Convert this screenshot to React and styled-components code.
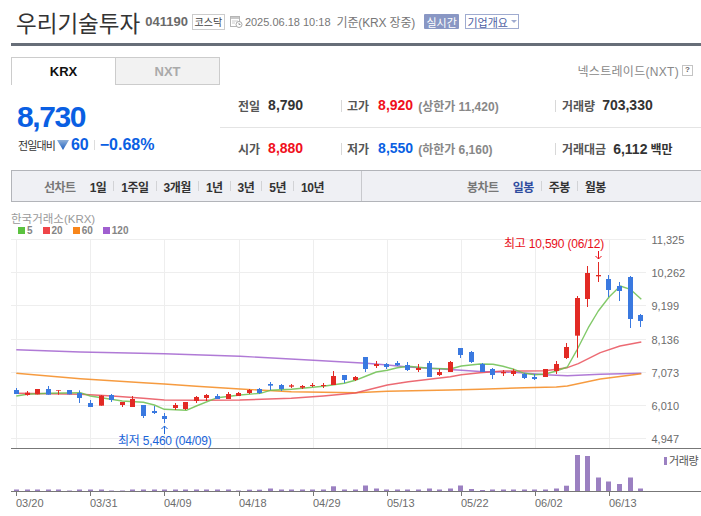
import styled, { createGlobalStyle } from "styled-components";

const GlobalStyle = createGlobalStyle`
  html, body {
    margin: 0;
    padding: 0;
    background: #fff;
    font-family: "Liberation Sans", "Noto Sans CJK KR", sans-serif;
  }
`;

const Page = styled.div`
  width: 701px;
  height: 516px;
  overflow: hidden;
  background: #fff;
`;

const Header = styled.div`
  display: flex;
  align-items: center;
  height: 43px;
  margin-left: 11px;
  padding-left: 5px;
  border-bottom: 3px solid #676e78;
  box-sizing: content-box;
`;

const Title = styled.h1`
  margin: 0 5px 0 0;
  font-size: 22.5px;
  font-weight: 400;
  color: #333;
  white-space: nowrap;
`;

const Code = styled.span`
  font-size: 13px;
  font-weight: 700;
  color: #6a6a6a;
  margin-right: 4px;
`;

const Market = styled.span`
  display: inline-flex;
  align-items: center;
  justify-content: center;
  width: 31px;
  height: 14px;
  border: 1px solid #ccc;
  font-size: 10px;
  color: #444;
  margin-right: 5px;
`;

const DateText = styled.span`
  font-size: 11px;
  color: #777;
  margin: 0 6px 0 2px;
  white-space: nowrap;
`;

const BaseText = styled.span`
  font-size: 12px;
  letter-spacing: -0.15px;
  color: #777;
  margin-right: 9px;
  white-space: nowrap;
`;

const RealTime = styled.span`
  display: inline-flex;
  align-items: center;
  justify-content: center;
  width: 35px;
  height: 15px;
  background: #8997c4;
  border-radius: 1px;
  color: #fff;
  font-size: 11px;
  margin-right: 6px;
`;

const CompanyButton = styled.span`
  display: inline-flex;
  align-items: center;
  justify-content: center;
  gap: 3px;
  width: 52px;
  height: 13px;
  border: 1px solid #9fabd0;
  color: #4d5ea3;
  font-size: 11px;
  &::after {
    content: "";
    border: 3px solid transparent;
    border-top: 3px solid #9fabd0;
    margin-top: 3px;
  }
`;

const TabRow = styled.div`
  display: flex;
  align-items: center;
  justify-content: space-between;
  margin: 11px 8px 0 11px;
  height: 28px;
`;

const Tabs = styled.div`
  display: flex;
`;

const Tab = styled.div`
  width: ${(props) => (props.$active ? 105 : 104)}px;
  height: 28px;
  box-sizing: border-box;
  display: flex;
  align-items: center;
  justify-content: center;
  font-size: 13px;
  font-weight: 700;
  border: 1px solid #ccc;
  border-bottom: ${(props) => (props.$active ? "none" : "1px solid #ccc")};
  border-left: ${(props) => (props.$active ? "1px solid #ccc" : "none")};
  color: ${(props) => (props.$active ? "#111" : "#aaa")};
  background: ${(props) => (props.$active ? "#fff" : "#f2f2f2")};
`;

const NextLink = styled.div`
  display: flex;
  align-items: center;
  gap: 3px;
  margin-bottom: 2px;
  font-size: 12px;
  letter-spacing: 0.3px;
  color: #888;
`;

const HelpBox = styled.span`
  display: inline-flex;
  align-items: center;
  justify-content: center;
  width: 9px;
  height: 9px;
  border: 1px solid #c4c4c4;
  font-size: 8px;
  font-weight: 700;
  line-height: 1;
  color: #666;
`;

const Summary = styled.div`
  display: flex;
  height: 85px;
  margin-left: 11px;
`;

const PriceBlock = styled.div`
  width: 209px;
  padding: 15px 0 0 6px;
  box-sizing: border-box;
`;

const Price = styled.div`
  font-size: 30px;
  line-height: 34px;
  font-weight: 700;
  letter-spacing: -1.4px;
  color: #0a5fe3;
`;

const ChangeRow = styled.div`
  display: flex;
  align-items: center;
  height: 20px;
  margin-top: 1px;
  color: #0a5fe3;
  font-weight: 700;
  font-size: 16px;
`;

const ChangeLabel = styled.span`
  font-size: 11px;
  font-weight: 400;
  letter-spacing: -0.9px;
  color: #333;
  margin: 0 2px 0 1px;
`;

const ChangeValue = styled.span`
  margin-left: 2px;
`;

const ChangeDivider = styled.span`
  width: 1px;
  height: 10px;
  background: #ddd;
  margin: 0 5px 0 5px;
`;

const Stats = styled.div`
  flex: 1;
`;

const StatRow = styled.div`
  display: grid;
  grid-template-columns: 121px 214px 1fr;
  height: 42px;
  border-bottom: ${(props) => (props.$line ? "1px solid #e4e4e4" : "none")};
`;

const StatCell = styled.div`
  position: relative;
  display: flex;
  align-items: center;
  gap: ${(props) => props.$gap || 8}px;
  padding-left: ${(props) => props.$pad}px;
  padding-bottom: 2px;
  white-space: nowrap;
  &::before {
    content: "";
    display: ${(props) => (props.$sep ? "block" : "none")};
    position: absolute;
    left: 0;
    top: 15px;
    width: 1px;
    height: 12px;
    background: #d8d8d8;
  }
`;

const StatLabel = styled.span`
  font-size: 12px;
  font-weight: 700;
  color: #555;
`;

const StatValue = styled.span`
  font-size: 14px;
  font-weight: 700;
  color: ${(props) => props.$color || "#333"};
`;

const StatUnit = styled.span`
  font-size: 12px;
  font-weight: 700;
  color: #333;
  margin-left: 3px;
`;

const StatNote = styled.span`
  font-size: 12px;
  font-weight: 700;
  color: #888;
  margin-left: -4px;
`;

const Toolbar = styled.div`
  display: flex;
  height: 30px;
  margin-left: 11px;
  background: #eff0f4;
  border: 1px solid #b2b4b9;
  border-right: none;
`;

const ToolGroup = styled.div`
  display: flex;
  align-items: center;
  width: ${(props) => props.$width}px;
  padding-left: ${(props) => props.$pad}px;
  box-sizing: border-box;
  border-right: ${(props) => (props.$split ? "1px solid #c8c9cd" : "none")};
`;

const ToolTitle = styled.div`
  font-size: 12px;
  font-weight: 700;
  letter-spacing: -0.5px;
  color: #777;
  margin-right: 14px;
`;

const ToolItem = styled.span`
  display: flex;
  align-items: center;
  font-size: 12px;
  font-weight: 700;
  letter-spacing: -0.5px;
  color: ${(props) => (props.$active ? "#2f4c9f" : "#333")};
  &:not(:first-of-type)::before {
    content: "";
    width: 1px;
    height: 10px;
    background: #d2d3d6;
    margin: 0 7px;
  }
`;

const Exchange = styled.div`
  height: 12px;
  margin: 11px 0 0 11px;
  font-size: 11.5px;
  line-height: 12px;
  color: #9a9a9a;
`;

const Legend = styled.div`
  display: flex;
  align-items: center;
  gap: 10px;
  height: 9px;
  margin: 1px 0 0 18px;
`;

const LegendItem = styled.span`
  display: flex;
  align-items: center;
  gap: 2px;
  font-size: 10px;
  font-weight: 700;
  color: #858585;
  &::before {
    content: "";
    width: 7px;
    height: 7px;
    background: ${(props) => props.$color};
  }
`;

const ChartSvg = styled.svg`
  display: block;
  overflow: visible;
`;

const RED = "#e22a24";
const BLUE = "#3a79e0";
const STEP = 10.58;
const BASE_Y = 340;

// [body top, body bottom, wick top, wick bottom, r|b], read off the 3x crop, relative to y=340
const candles = [
  [147, 159, 141, 159, "b"], [155, 162, 150, 164, "r"], [144, 160, 144, 160, "r"], [144, 161, 135, 161, "b"],
  [148, 150, 148, 161, "r"], [147, 160, 147, 160, "b"], [156, 171, 148, 186, "b"], [186, 198, 177, 198, "b"],
  [164, 194, 162, 194, "r"], [162, 177, 159, 183, "b"], [183, 192, 183, 198, "r"], [174, 198, 165, 198, "r"],
  [192, 225, 192, 231, "b"], [210, 216, 195, 219, "b"], [225, 234, 216, 246, "b"], [192, 201, 186, 207, "r"],
  [183, 204, 183, 207, "r"], [168, 180, 165, 186, "r"], [162, 171, 159, 180, "r"], [165, 174, 159, 174, "b"],
  [159, 174, 153, 174, "r"], [156, 165, 153, 165, "r"], [147, 156, 144, 159, "r"], [144, 156, 141, 159, "b"],
  [129, 134, 123, 147, "b"], [132, 144, 129, 150, "b"], [133, 137, 129, 141, "r"], [135, 140, 132, 144, "r"],
  [132, 135, 126, 138, "r"], [132, 135, 126, 141, "r"], [105, 132, 90, 132, "r"], [102, 117, 102, 126, "b"],
  [108, 117, 105, 120, "r"], [48, 84, 48, 93, "b"], [69, 75, 60, 81, "r"], [69, 78, 66, 84, "b"],
  [66, 73, 60, 75, "b"], [72, 87, 63, 90, "b"], [81, 87, 69, 93, "r"], [66, 108, 60, 108, "b"],
  [93, 102, 84, 105, "r"], [63, 93, 60, 93, "r"], [21, 42, 21, 51, "b"], [33, 63, 30, 66, "b"],
  [69, 93, 66, 93, "b"], [84, 102, 81, 114, "b"], [93, 97, 87, 105, "r"], [90, 99, 84, 105, "r"],
  [99, 111, 96, 114, "b"], [108, 114, 99, 117, "b"], [84, 108, 84, 108, "r"], [69, 90, 60, 99, "r"],
  [18, 51, 6, 54, "r"], [-129, -16, -135, 50, "r"], [-204, -126, -225, -102, "r"], [-198, -194, -237, -177, "r"],
  [-186, -153, -198, -132, "b"], [-165, -150, -177, -120, "b"], [-192, -66, -195, -39, "b"], [-78, -60, -81, -42, "b"],
];

const volumes = [
  1.5, 1.5, 1.5, 1.5, 1.5, 0.5, 1.5, 1.5, 1.5, 0.5, 0.5, 1.5, 1.5, 1.5, 1.5, 1.5, 1.5, 1.5, 1.5, 1.5, 1.5, 0.5,
  1.3, 1.3, 2.5, 1.5, 1.5, 1.5, 1.5, 1.5, 4.7, 1.5, 1.5, 5.5, 2.5, 1.5, 1.5, 1.5, 1.5, 2.5, 1.5, 2.5, 5.5, 2,
  1, 1.5, 1.5, 1.5, 1.5, 1.5, 1.5, 2.5, 5.3, 36, 35, 13.5, 9.5, 7, 13.5, 2.5,
];

const averages = [
  {
    color: "#a263cf",
    points:
      "16.3,348.7 80.3,351 164.3,352.7 240,355.3 313.3,359.3 366.3,362.3 387.3,364 408.3,366 429.3,367.3 461.3,369.3 480,370.5 514,371.3 545.3,373.7 567.3,374.7 600.3,373.3 641.3,372.3",
  },
  {
    color: "#f58a1f",
    points:
      "16.3,372.3 80.3,377.7 143.3,381.7 164.3,383 196.3,385.3 240,388 291.3,390.7 323.3,391.3 355.3,391.7 387.3,390.3 450.3,389 480,388.3 524.3,386.7 556.3,386 567.3,385 600.3,378 641.3,372.7",
  },
  {
    color: "#e9505a",
    points:
      "16.3,392.3 48.3,392.7 80.3,393.3 112.3,395 143.3,397.3 164.3,399 196.3,399.3 240,399 291.3,397.3 323.3,395 355.3,392 366.3,389.3 387.3,384 408.3,380.7 429.3,378.3 450.3,375.7 461.3,373.7 480,371.7 503,370 524.3,370 545.3,369.7 567.3,366.7 578.3,362.7 600.3,351.7 620,345 641.3,341",
  },
  {
    color: "#6cc04f",
    points:
      "16.3,395 27.3,393.3 48.3,392.3 80.3,391.7 90.3,395 101.3,396.7 122.3,400 143.3,401.3 154.3,404 164.3,408.3 186.3,409.3 196.3,405 217.3,396.7 240,394 260.3,392.3 270.3,389.3 291.3,388.3 323.3,385.3 344.3,382.3 355.3,379.3 366.3,375 376.3,371 387.3,369.3 397.3,366.7 408.3,365.3 429.3,367.3 450.3,368 461.3,365 480,363 493,363.3 503,365.3 514,368.3 524.3,372.3 535,373.7 545.3,373 556.3,370 567.3,366 577.3,348.3 588.3,326.7 598.3,310 609.3,295.7 620.3,285 630.3,288.3 641.3,298.3",
  },
];

const priceLines = [
  [238.5, "11,325"],
  [271.5, "10,262"],
  [304.5, "9,199"],
  [338.5, "8,136"],
  [371.5, "7,073"],
  [404.5, "6,010"],
  [437.5, "4,947"],
];

const dates = [
  [16.5, "03/20"],
  [90.5, "03/31"],
  [164.5, "04/09"],
  [239.5, "04/18"],
  [313.5, "04/29"],
  [387.5, "05/13"],
  [461.5, "05/22"],
  [535.5, "06/02"],
  [609.5, "06/13"],
];

const CandleChart = () => (
  <ChartSvg width="701" height="282" viewBox="0 234 701 282">
    <g stroke="#eeeeee" strokeWidth="1">
      {priceLines.map(([y]) => (
        <line key={y} x1="11" x2="646" y1={y} y2={y} />
      ))}
      {dates.map(([x]) => (
        <line key={x} x1={x} x2={x} y1="238" y2="447" />
      ))}
    </g>
    <g fontFamily="Liberation Sans, sans-serif" fontSize="11" fill="#6c6c6c">
      {priceLines.map(([y, label]) => (
        <text key={label} x="651.5" y={y + 4.5}>
          {label}
        </text>
      ))}
      {dates.map(([x, label]) => (
        <text key={label} x={x - 0.5} y="506">
          {label}
        </text>
      ))}
    </g>
    {averages.map((line) => (
      <polyline
        key={line.color}
        points={line.points}
        fill="none"
        stroke={line.color}
        strokeWidth="1.4"
        strokeLinejoin="round"
        opacity="0.85"
      />
    ))}
    {candles.map(([top, bottom, wickTop, wickBottom, kind], i) => {
      const x = Math.round(16.5 + STEP * i - 0.5) + 0.5;
      const color = kind === "r" ? RED : BLUE;
      return (
        <g key={i} fill={color}>
          <rect x={x - 0.5} y={BASE_Y + wickTop / 3} width="1" height={(wickBottom - wickTop) / 3} />
          <rect x={x - 2.5} y={BASE_Y + top / 3} width="5" height={(bottom - top) / 3} />
        </g>
      );
    })}
    <line x1="11" x2="701" y1="447.5" y2="447.5" stroke="#777" />
    <line x1="11" x2="701" y1="490.5" y2="490.5" stroke="#777" />
    {dates.map(([x]) => (
      <line key={x} x1={x} x2={x} y1="491" y2="495" stroke="#777" />
    ))}
    {volumes.map((h, i) => (
      <rect
        key={i}
        x={Math.round(16.5 + STEP * i - 0.5) - 2}
        y={490 - h}
        width="5"
        height={h}
        fill="#9b80c1"
      />
    ))}
    <rect x="664" y="456" width="3" height="8" fill="#9b80c1" />
    <text x="669" y="464" fontFamily="Noto Sans CJK KR, sans-serif" fontSize="11" fill="#555" letterSpacing="-0.4">
      거래량
    </text>

    <text x="504" y="247" fontFamily="Liberation Sans, Noto Sans CJK KR, sans-serif" fontSize="12" fill="#e8101a" letterSpacing="-0.2">
      최고 10,590 (06/12)
    </text>
    <path d="M598.5 250V258M595.5 255L598.5 258L601.5 255" fill="none" stroke="#e8101a" strokeWidth="1" />

    <text x="118" y="444" fontFamily="Liberation Sans, Noto Sans CJK KR, sans-serif" fontSize="12" fill="#1a64d8" letterSpacing="-0.2">
      최저 5,460 (04/09)
    </text>
    <path d="M164.5 433V425M161.5 428L164.5 425L167.5 428" fill="none" stroke="#1a64d8" strokeWidth="1" />
  </ChartSvg>
);

const CalendarIcon = () => (
  <svg width="13" height="13" viewBox="0 0 13 13">
    <rect x="0.5" y="1.5" width="9" height="10" fill="#fff" stroke="#b5b5b5" />
    <rect x="1" y="2" width="8" height="2" fill="#c9c9c9" />
    <path d="M2 6H8M2 8H5" stroke="#ccc" />
    <circle cx="9" cy="9.5" r="3" fill="#fff" stroke="#aaa" />
    <path d="M9 8V9.5H10.5" fill="none" stroke="#999" />
  </svg>
);

const DownTriangle = () => (
  <svg width="12" height="10" viewBox="0 0 12 10">
    <defs>
      <linearGradient id="fall" x1="0" y1="0" x2="0" y2="1">
        <stop offset="0" stopColor="#8fb0d8" />
        <stop offset="1" stopColor="#1c5fc0" />
      </linearGradient>
    </defs>
    <path d="M0 0H12L6 10Z" fill="url(#fall)" />
  </svg>
);

const App = () => (
  <Page>
    <GlobalStyle />
    <Header>
      <Title>우리기술투자</Title>
      <Code>041190</Code>
      <Market>코스닥</Market>
      <CalendarIcon />
      <DateText>2025.06.18 10:18</DateText>
      <BaseText>기준(KRX 장중)</BaseText>
      <RealTime>실시간</RealTime>
      <CompanyButton>기업개요</CompanyButton>
    </Header>

    <TabRow>
      <Tabs>
        <Tab $active>KRX</Tab>
        <Tab>NXT</Tab>
      </Tabs>
      <NextLink>
        넥스트레이드(NXT)
        <HelpBox>?</HelpBox>
      </NextLink>
    </TabRow>

    <Summary>
      <PriceBlock>
        <Price>8,730</Price>
        <ChangeRow>
          <ChangeLabel>전일대비</ChangeLabel>
          <DownTriangle />
          <ChangeValue>60</ChangeValue>
          <ChangeDivider />
          <span>−0.68%</span>
        </ChangeRow>
      </PriceBlock>
      <Stats>
        <StatRow $line>
          <StatCell $pad={18}>
            <StatLabel>전일</StatLabel>
            <StatValue>8,790</StatValue>
          </StatCell>
          <StatCell $pad={6} $sep $gap={9}>
            <StatLabel>고가</StatLabel>
            <StatValue $color="#f0101c">8,920</StatValue>
            <StatNote>(상한가 11,420)</StatNote>
          </StatCell>
          <StatCell $pad={7} $sep $gap={7}>
            <StatLabel>거래량</StatLabel>
            <StatValue>703,330</StatValue>
          </StatCell>
        </StatRow>
        <StatRow>
          <StatCell $pad={18}>
            <StatLabel>시가</StatLabel>
            <StatValue $color="#f0101c">8,880</StatValue>
          </StatCell>
          <StatCell $pad={6} $sep $gap={9}>
            <StatLabel>저가</StatLabel>
            <StatValue $color="#0a5fe3">8,550</StatValue>
            <StatNote>(하한가 6,160)</StatNote>
          </StatCell>
          <StatCell $pad={7} $sep $gap={7}>
            <StatLabel>거래대금</StatLabel>
            <StatValue>
              6,112
              <StatUnit>백만</StatUnit>
            </StatValue>
          </StatCell>
        </StatRow>
      </Stats>
    </Summary>

    <Toolbar>
      <ToolGroup $width={350} $pad={32} $split>
        <ToolTitle>선차트</ToolTitle>
        <ToolItem>1일</ToolItem>
        <ToolItem>1주일</ToolItem>
        <ToolItem>3개월</ToolItem>
        <ToolItem>1년</ToolItem>
        <ToolItem>3년</ToolItem>
        <ToolItem>5년</ToolItem>
        <ToolItem>10년</ToolItem>
      </ToolGroup>
      <ToolGroup $width={339} $pad={105}>
        <ToolTitle>봉차트</ToolTitle>
        <ToolItem $active>일봉</ToolItem>
        <ToolItem>주봉</ToolItem>
        <ToolItem>월봉</ToolItem>
      </ToolGroup>
    </Toolbar>

    <Exchange>한국거래소(KRX)</Exchange>
    <Legend>
      <LegendItem $color="#5bc23f">5</LegendItem>
      <LegendItem $color="#ef4549">20</LegendItem>
      <LegendItem $color="#f8861a">60</LegendItem>
      <LegendItem $color="#a05fd0">120</LegendItem>
    </Legend>
    <CandleChart />
  </Page>
);

export default App;
